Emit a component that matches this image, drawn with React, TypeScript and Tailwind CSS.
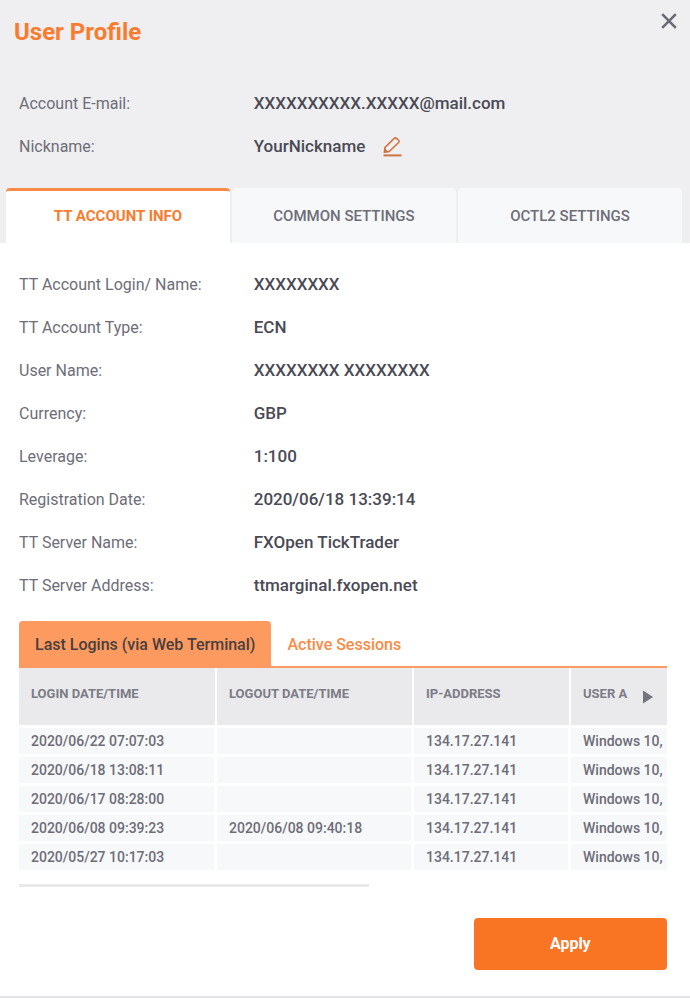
import { useState } from 'react';

const accountInfo = [
  { label: 'TT Account Login/ Name:', value: 'XXXXXXXX' },
  { label: 'TT Account Type:', value: 'ECN' },
  { label: 'User Name:', value: 'XXXXXXXX XXXXXXXX' },
  { label: 'Currency:', value: 'GBP' },
  { label: 'Leverage:', value: '1:100' },
  { label: 'Registration Date:', value: '2020/06/18 13:39:14' },
  { label: 'TT Server Name:', value: 'FXOpen TickTrader' },
  { label: 'TT Server Address:', value: 'ttmarginal.fxopen.net' },
];

const logins = [
  { login: '2020/06/22 07:07:03', logout: '', ip: '134.17.27.141', agent: 'Windows 10,' },
  { login: '2020/06/18 13:08:11', logout: '', ip: '134.17.27.141', agent: 'Windows 10,' },
  { login: '2020/06/17 08:28:00', logout: '', ip: '134.17.27.141', agent: 'Windows 10,' },
  { login: '2020/06/08 09:39:23', logout: '2020/06/08 09:40:18', ip: '134.17.27.141', agent: 'Windows 10,' },
  { login: '2020/05/27 10:17:03', logout: '', ip: '134.17.27.141', agent: 'Windows 10,' },
];

const tabs = ['TT ACCOUNT INFO', 'COMMON SETTINGS', 'OCTL2 SETTINGS'];

function InfoRow({ label, value, children }: { label: string; value: string; children?: React.ReactNode }) {
  return (
    <div className="flex h-[43px] items-center">
      <dt className="w-[36%] flex-none text-base text-[#6d6d78]">{label}</dt>
      <dd className="flex items-center text-[17px] font-medium text-[#4a4a56]">
        {value}
        {children}
      </dd>
    </div>
  )
}

function LoginsTable() {
  const cell = 'overflow-hidden whitespace-nowrap bg-[#f7f8fa] pl-3 leading-[26px] border-t-[3px] border-white bg-clip-padding'
  return (
    <table className="w-full table-fixed border-separate border-spacing-0 text-left text-sm font-medium text-[#6d6d78]">
      <thead>
        <tr className="h-[57px] text-[13px] text-[#7c7c86]">
          <th className="w-[198px] border-r-2 border-white bg-[#eaeaec] bg-clip-padding pb-1 pl-3 font-bold">LOGIN DATE/TIME</th>
          <th className="w-[197px] border-r-2 border-white bg-[#eaeaec] bg-clip-padding pb-1 pl-3 font-bold">LOGOUT DATE/TIME</th>
          <th className="w-[157px] border-r-2 border-white bg-[#eaeaec] bg-clip-padding pb-1 pl-3 font-bold">IP-ADDRESS</th>
          <th className="bg-[#eaeaec] pl-3 font-bold">
            <div className="flex items-center justify-between pb-1 pr-[14px]">
              <span>USER A</span>
              <svg className="mt-1" width="10" height="14" viewBox="0 0 10 14" fill="#74747e">
                <path d="M0 0.5L10 7L0 13.5Z" />
              </svg>
            </div>
          </th>
        </tr>
      </thead>
      <tbody>
        {logins.map((row) => (
          <tr key={row.login}>
            <td className={`${cell} border-r-[3px]`}>{row.login}</td>
            <td className={`${cell} border-r-[3px]`}>{row.logout}</td>
            <td className={`${cell} border-r-[3px]`}>{row.ip}</td>
            <td className={cell}>{row.agent}</td>
          </tr>
        ))}
      </tbody>
    </table>
  )
}

function App() {
  const [activeTab, setActiveTab] = useState(tabs[0])
  return (
    <main className="border-b-2 border-[#e4e4e6] bg-white font-['Roboto',sans-serif]">
      <header className="bg-[#efeff1]">
        <div className="flex items-start justify-between pl-[14px] pr-3 pt-3">
          <h1 className="pt-1 text-2xl font-bold text-[#f97c2e]">User Profile</h1>
          <button type="button" aria-label="Close" className="p-px">
            <svg width="16" height="16" viewBox="0 0 16 16" stroke="#6a6a75" strokeWidth="2.6">
              <path d="M1.2 1.2L14.8 14.8M14.8 1.2L1.2 14.8" />
            </svg>
          </button>
        </div>
        <dl className="px-[19px] pb-5 pt-[34px]">
          <InfoRow label="Account E-mail:" value="XXXXXXXXXX.XXXXX@mail.com" />
          <InfoRow label="Nickname:" value="YourNickname">
            <button type="button" aria-label="Edit nickname" className="ml-[18px]">
              <svg width="19" height="20" viewBox="0 0 19 20" fill="none" stroke="#cb7440" strokeWidth="1.5">
                <path d="M1.4 15.2L1.8 10.6L11.2 1.4Q12.4 0.4 13.6 1.4L15.6 3.3Q16.6 4.4 15.6 5.6L6.2 14.6Z" />
                <path d="M1.8 11.6L5.4 14.8L1.2 15.4Z" fill="#cb7440" strokeWidth="0.5" />
                <path d="M0.5 18.4H18.5" strokeWidth="2" />
              </svg>
            </button>
          </InfoRow>
        </dl>
        <nav className="flex gap-[2px] pl-[6px] pr-2">
          {tabs.map((tab) => (
            <button
              key={tab}
              type="button"
              onClick={() => setActiveTab(tab)}
              className={`h-[55px] flex-1 rounded-t border-t-[3px] pb-[2px] text-[15px] ${
                activeTab === tab
                  ? 'border-[#fb8b47] bg-white font-bold text-[#f97c2e]'
                  : 'border-[#f7f8fa] bg-[#f7f8fa] font-medium text-[#6d6d78]'
              }`}
            >
              {tab}
            </button>
          ))}
        </nav>
      </header>

      <dl className="px-[19px] pt-5">
        {accountInfo.map((item) => (
          <InfoRow key={item.label} label={item.label} value={item.value} />
        ))}
      </dl>

      <section className="pl-[19px] pr-[23px] pt-[14px]">
        <div className="flex border-b-2 border-[#fc9a5f]">
          <button type="button" className="h-[45px] rounded-t bg-[#fc9a5f] px-4 pt-[2px] text-base font-medium text-[#4a3f3f]">
            Last Logins (via Web Terminal)
          </button>
          <button type="button" className="px-4 pt-[2px] text-base font-medium text-[#fa8a45]">
            Active Sessions
          </button>
        </div>
        <LoginsTable />
        <div className="mt-[14px] h-[3px] w-[54%] bg-[#e9e9eb]" />
      </section>

      <footer className="flex justify-end pb-[26px] pr-[23px] pt-[31px]">
        <button type="button" className="h-[52px] w-[29%] rounded bg-[#f97524] text-base font-bold text-white">
          Apply
        </button>
      </footer>
    </main>
  )
}

export default App;
